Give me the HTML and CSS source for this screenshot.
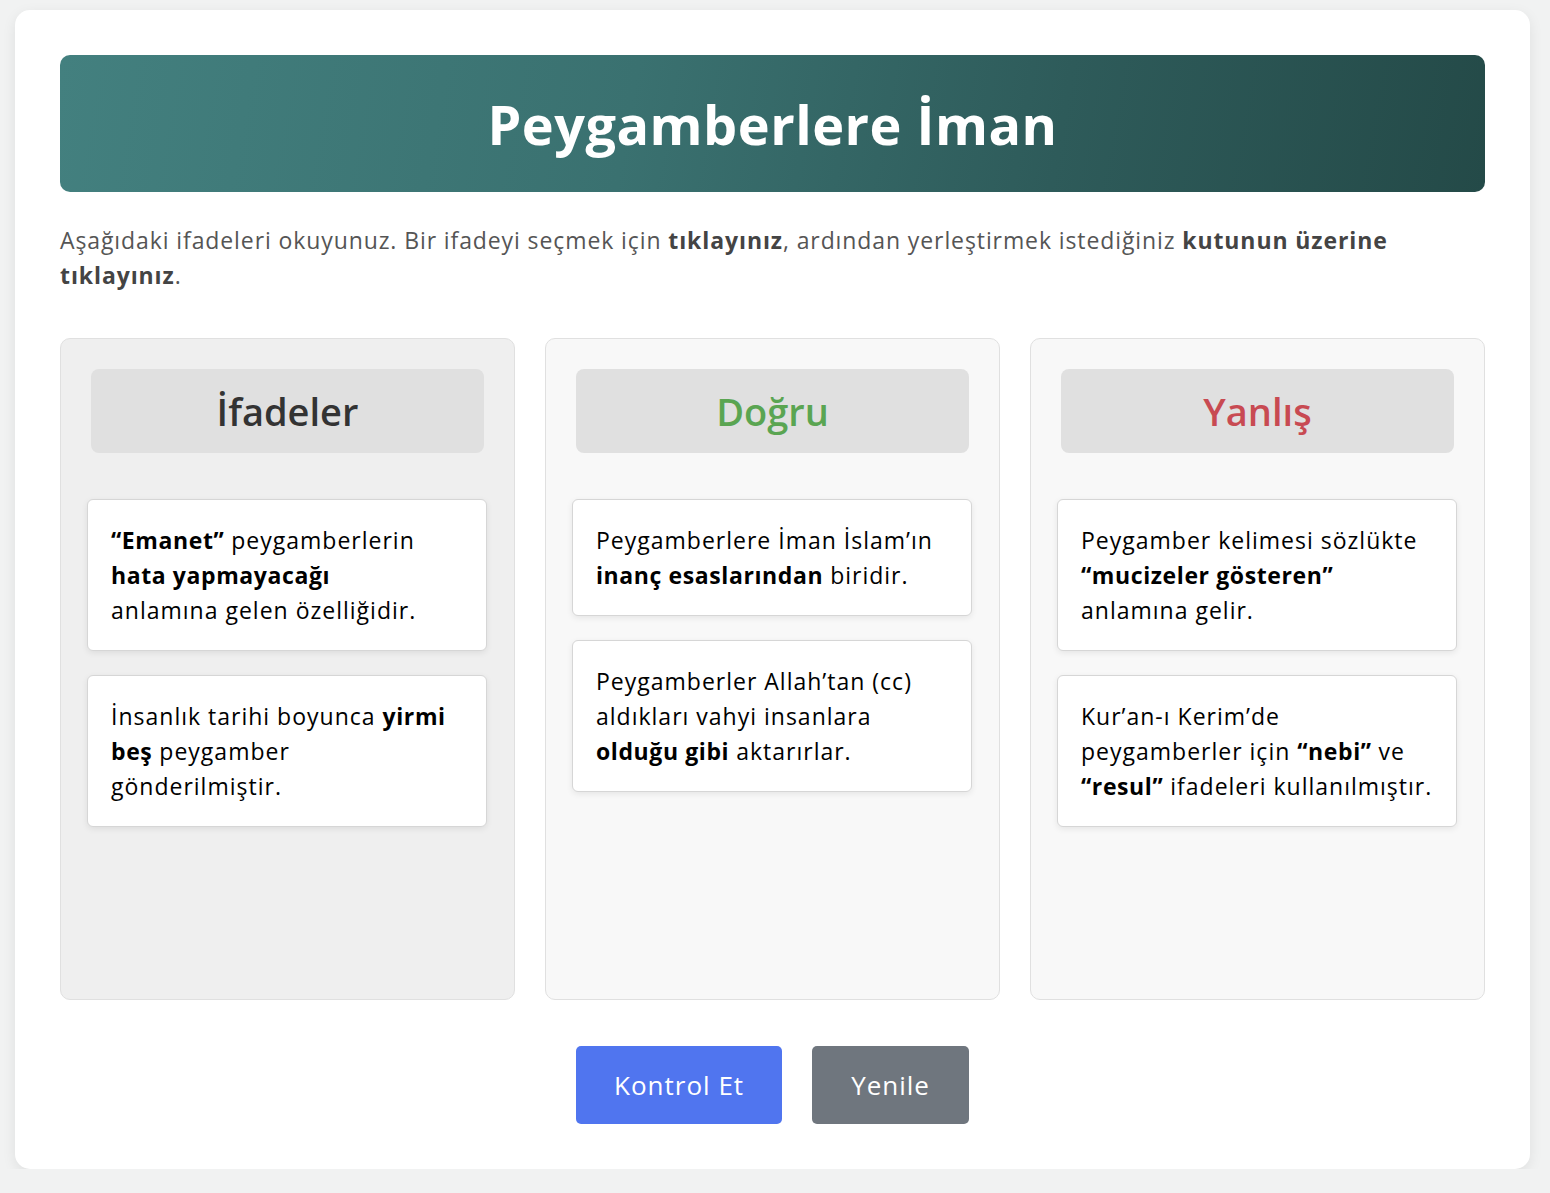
FILE: index.html
```html
<!DOCTYPE html>
<html lang="tr">
<head>
<meta charset="utf-8">
<title>Peygamberlere İman</title>
<link rel="stylesheet" href="styles.css">
</head>
<body>
<div class="container">
  <header class="banner"><h1>Peygamberlere İman</h1></header>
  <p class="instructions">Aşağıdaki ifadeleri okuyunuz. Bir ifadeyi seçmek için <b>tıklayınız</b>, ardından yerleştirmek istediğiniz <b>kutunun üzerine tıklayınız</b>.</p>
  <div class="columns">
    <section class="column column-source">
      <h2 class="col-title title-neutral">İfadeler</h2>
      <div class="cards">
        <div class="card"><b>“Emanet”</b> peygamberlerin <b>hata yapmayacağı</b><br>anlamına gelen özelliğidir.</div>
        <div class="card">İnsanlık tarihi boyunca <b>yirmi beş</b> peygamber gönderilmiştir.</div>
      </div>
    </section>
    <section class="column">
      <h2 class="col-title title-true">Doğru</h2>
      <div class="cards">
        <div class="card">Peygamberlere İman İslam’ın <b>inanç esaslarından</b> biridir.</div>
        <div class="card">Peygamberler Allah’tan (cc) aldıkları vahyi insanlara <b>olduğu gibi</b> aktarırlar.</div>
      </div>
    </section>
    <section class="column">
      <h2 class="col-title title-false">Yanlış</h2>
      <div class="cards">
        <div class="card">Peygamber kelimesi sözlükte <b>“mucizeler gösteren”</b> anlamına gelir.</div>
        <div class="card">Kur’an-ı Kerim’de peygamberler için <b>“nebi”</b> ve <b>“resul”</b> ifadeleri kullanılmıştır.</div>
      </div>
    </section>
  </div>
  <div class="actions">
    <button class="btn btn-primary">Kontrol Et</button>
    <button class="btn btn-secondary">Yenile</button>
  </div>
</div>
</body>
</html>
```
FILE: styles.css
```css
* { box-sizing: border-box; }
html, body { margin: 0; }
body {
  background: #f1f2f2;
  font-family: "Open Sans", "DejaVu Sans", sans-serif;
  color: #000;
  padding: 10px 20px 0 15px;
}
.container {
  background: #fff;
  border-radius: 15px;
  box-shadow: 0 4px 14px rgba(0,0,0,0.08);
  padding: 45px;
  width: 1515px;
}
.banner {
  background: linear-gradient(100deg, #43807f 0%, #3a7170 40%, #2e5b5a 70%, #244a48 100%);
  border-radius: 10px;
  height: 137px;
  display: flex;
  align-items: center;
  justify-content: center;
}
.banner h1 {
  margin: 0;
  color: #fff;
  font-size: 54px;
  font-weight: 700;
  letter-spacing: 0.5px;
}
.instructions {
  margin: 31px 0 45px;
  font-size: 23px;
  line-height: 35px;
  color: #555;
  letter-spacing: 0.9px;
}
.instructions b { color: #444; font-weight: 700; }
.columns {
  display: grid;
  grid-template-columns: repeat(3, 1fr);
  gap: 30px;
}
.column {
  background: #f8f8f8;
  border: 1px solid #e0e0e0;
  border-radius: 10px;
  padding: 30px;
  min-height: 662px;
}
.column-source { background: #efefef; }
.col-title {
  margin: 0 0 46px;
  height: 84px;
  background: #e0e0e0;
  border-radius: 8px;
  display: flex;
  align-items: center;
  justify-content: center;
  font-size: 38px;
  font-weight: 600;
}
.title-neutral { color: #333; }
.title-true { color: #5aa552; }
.title-false { color: #c84a52; }
.cards {
  display: flex;
  flex-direction: column;
  gap: 24px;
  margin: 0 -3px 0 -4px;
}
.card {
  background: #fff;
  border: 1px solid #d6d6d6;
  border-radius: 6px;
  box-shadow: 0 2px 6px rgba(0,0,0,0.08);
  padding: 23px 23px 22px;
  font-size: 23px;
  line-height: 35px;
  letter-spacing: 1px;
}
.card b { font-weight: 700; letter-spacing: 0.6px; }
.actions {
  display: flex;
  justify-content: center;
  gap: 30px;
  margin-top: 46px;
}
.btn {
  border: none;
  border-radius: 5px;
  height: 78px;
  padding: 0 38px;
  font-family: inherit;
  font-size: 26px;
  color: #fff;
  letter-spacing: 1px;
}
.btn-primary { background: #5075ef; }
.btn-secondary { background: #6f767e; padding: 0 39px; }
```
